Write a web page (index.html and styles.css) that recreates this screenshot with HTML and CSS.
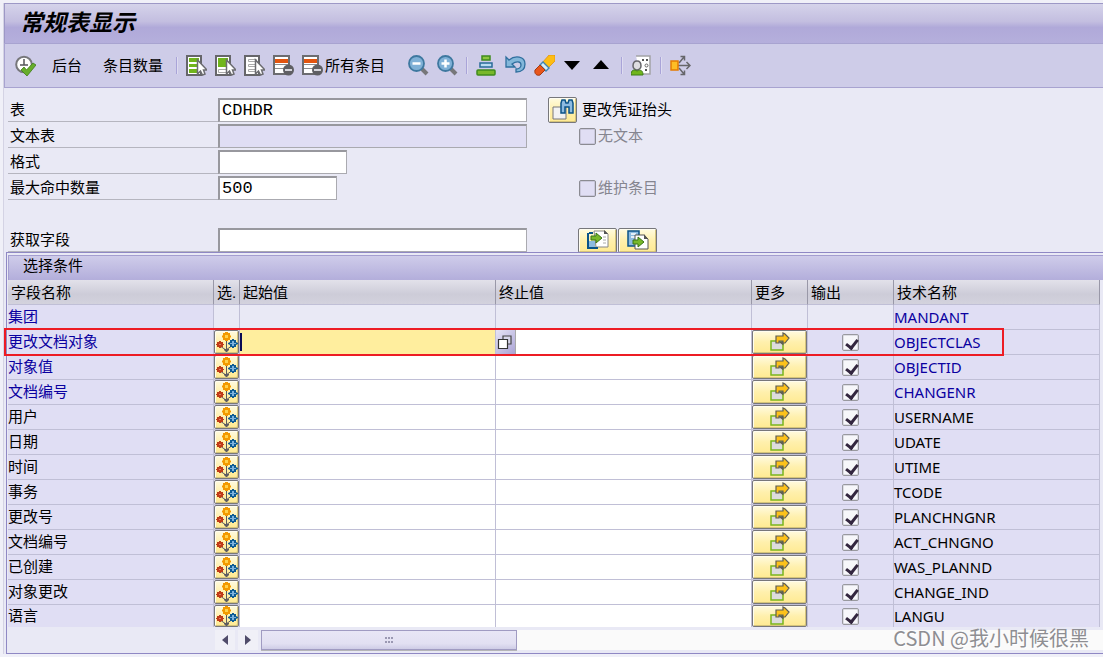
FILE: index.html
```html
<!DOCTYPE html>
<html lang="zh-CN">
<head>
<meta charset="utf-8">
<title>常规表显示</title>
<link rel="stylesheet" href="styles.css">
</head>
<body>
<svg class="sprite" aria-hidden="true">
  <symbol id="i-flower" viewBox="0 0 23 22">
    <path d="M11.500 8v11M5 15l6 4 7-5" fill="none" stroke="#5b5b60" stroke-width="1"/>
    <path d="M9 18h5v1l-2 2h-1l-2-2z" fill="#5b5b60"/>
    <path d="M10 1h3v1h2v2l1 1v1l-1 1v2h-2v1h-3V9H8V7L7 6V5l1-1V2h2z" fill="#f39a00"/>
    <path d="M10 4h3v3h-3z" fill="#ffd24a"/>
    <path d="M4 10h2v1h2v2h1v1H8v2H6v1H4v-1H2v-2H1v-1h1v-2h2z" fill="#bf3a18"/>
    <path d="M4 13h2v1H4z" fill="#e08060"/>
    <path d="M17 8h2v1h2v2l2 1v1l-2 1v2h-2v1h-2v-1h-2v-2l-2-1v-1l2-1V9h2z" fill="#0d5b94"/>
    <path d="M15 12h6v1h-6zM17 10h2v5h-2z" fill="#7db2dc"/>
  </symbol>
  <symbol id="i-more" viewBox="0 0 20 20">
    <rect x="1" y="9" width="12" height="9" fill="#dcdcdc" stroke="#7ab51d" stroke-width="1.500"/>
    <path d="M8 9.500h5.500v4z" fill="#5d5d55"/>
    <path d="M6 4h7V1l2 1 4 4-4 5h-2V9H9v2H6z" fill="#fdc21a" stroke="#5d5d55" stroke-width="1.200"/>
  </symbol>
  <symbol id="i-sheet" viewBox="0 0 21 21">
    <rect x="1" y="1" width="14" height="19" fill="#fff" stroke="#66666a" stroke-width="2"/>
  </symbol>
  <symbol id="i-pointer" viewBox="0 0 21 21">
    <path d="M11.500 5v14l3-3 2 4 2.500-1-1.500-4H21z" fill="#fff" stroke="#6c6c70" stroke-width="1.500"/>
  </symbol>
  <symbol id="i-minus" viewBox="0 0 21 21">
    <rect x="1" y="1" width="15" height="18" fill="#fff" stroke="#6c6c70" stroke-width="2"/>
    <path d="M2 4h13v4H2z" fill="#e2540f"/><path d="M2 9.500h13M2 13.500h9" stroke="#8d8d90"/>
    <circle cx="15.500" cy="15" r="5.500" fill="#5f5f63"/><path d="M12 15h7" stroke="#d6d6dc" stroke-width="2"/>
  </symbol>
</svg>

<main class="window">
  <header class="titlebar"><h1>常规表显示</h1></header>

  <nav class="toolbar" aria-label="工具栏">
    <button type="button" aria-label="执行"><svg viewBox="0 0 21 21"><circle cx="9" cy="9.500" r="7.800" fill="#fff" stroke="#77777b" stroke-width="2"/><path d="M9 4v6M5 10h8" stroke="#55555a" stroke-width="1.500"/><path d="M6 15l3-3 2.500 3L18 8l3 2-9 11z" fill="#67ad2b" stroke="#3d7d16" stroke-width=".8"/></svg></button>
    <button type="button" class="text">后台</button>
    <button type="button" class="text">条目数量</button>
    <i class="sep"></i>
    <button type="button" aria-label="全选"><svg viewBox="0 0 21 21"><use href="#i-sheet"/><path d="M3 3h10v4H3zM3 9h10v3H3zM3 14h10v4H3z" fill="#70b51c"/><use href="#i-pointer"/></svg></button>
    <button type="button" aria-label="选择块"><svg viewBox="0 0 21 21"><use href="#i-sheet"/><path d="M3 3h10v9H3z" fill="#70b51c"/><path d="M3.500 14.500h8v3h-8z" fill="none" stroke="#aaa"/><use href="#i-pointer"/></svg></button>
    <button type="button" aria-label="取消全选"><svg viewBox="0 0 21 21"><use href="#i-sheet"/><path d="M4.500 4.500h8v2h-8zM4.500 9.500h8v2h-8zM4.500 14.500h8v2h-8z" fill="#fff" stroke="#aaa"/><use href="#i-pointer"/></svg></button>
    <button type="button" aria-label="删除条目"><svg viewBox="0 0 21 21"><use href="#i-minus"/></svg></button>
    <button type="button" class="wide"><svg viewBox="0 0 21 21"><use href="#i-minus"/></svg>所有条目</button>
    <button type="button" aria-label="缩小"><svg viewBox="0 0 21 21"><path d="M14 14l5 5" stroke="#77777a" stroke-width="4"/><circle cx="8.500" cy="8.500" r="7.500" fill="#7fb0d6" stroke="#3e789f" stroke-width="1.800"/><path d="M4.500 8.500h8" stroke="#fff" stroke-width="2.500"/></svg></button>
    <button type="button" aria-label="放大"><svg viewBox="0 0 21 21"><path d="M14 14l5 5" stroke="#77777a" stroke-width="4"/><circle cx="8.500" cy="8.500" r="7.500" fill="#7fb0d6" stroke="#3e789f" stroke-width="1.800"/><path d="M4.500 8.500h8M8.500 4.500v8" stroke="#fff" stroke-width="2.500"/></svg></button>
    <i class="sep"></i>
    <button type="button" aria-label="排序"><svg viewBox="0 0 21 21"><rect x="6" y="1" width="8" height="4" fill="#8cc63f" stroke="#3f8a1c" stroke-width="1.500"/><rect x="4" y="8" width="12" height="4" fill="#b9dcf2" stroke="#2a6b98" stroke-width="1.500"/><rect x="1" y="15" width="18" height="5" rx="1" fill="#78b82a" stroke="#3f8a1c" stroke-width="1.500"/></svg></button>
    <button type="button" aria-label="撤销"><svg viewBox="0 0 21 21"><path d="M1 2v10h9l-3-3c4-3 9-3 9 1 0 2-2 4-5 4v3c6 0 9-3 9-8C20 1 10 0 4 5z" fill="#83b7da" stroke="#2f6f9e" stroke-width="1.300"/></svg></button>
    <button type="button" aria-label="清除"><svg viewBox="0 0 21 21"><path d="M15 0h6v6l-8 8-5-6z" fill="#fdbd14" stroke="#e08b00" stroke-width=".7"/><path d="M9 7l6 6-3 3-6-6z" fill="#d9ecf7" stroke="#3e85b4" stroke-width="1.400"/><path d="M6 10l5 5-5 5c-3 1-6-1-5-5z" fill="#e8551b" stroke="#a33a12"/></svg></button>
    <button type="button" aria-label="向下"><svg viewBox="0 0 21 21"><path d="M1 6h16l-8 9z"/></svg></button>
    <button type="button" aria-label="向上"><svg viewBox="0 0 21 21"><path d="M1 14h16L9 5z"/></svg></button>
    <i class="sep"></i>
    <button type="button" aria-label="用户设置"><svg viewBox="0 0 21 21"><path d="M5 1h14v18H9" fill="#fff" stroke="#a2a2a5" stroke-width="1.500"/><path d="M11 4h2v2h-2zM15 4h2v2h-2zM14 14h2v2h-2z" fill="#555"/><circle cx="15.500" cy="10.500" r="1.500" fill="none" stroke="#666"/><path d="M6 6c4 0 4 3 4 5s-2 4-4 4-4-2-4-4 0-5 4-5z" fill="#dedee0" stroke="#66666a" stroke-width="1.500"/><path d="M0 20c0-5 3-6 6-4 4-2 6 0 6 4z" fill="#70b51c" stroke="#3d7d16"/></svg></button>
    <i class="sep"></i>
    <button type="button" aria-label="分发"><svg viewBox="0 0 21 21"><path d="M9 8l5-6M10.500 1.500h4v4M9 13l5 6M10.500 19.500h4v-4M8 10.500h12M16.500 7l3.500 3.500-3.500 3.500" fill="none" stroke="#66666a" stroke-width="1.500"/><rect x="1" y="6" width="7" height="9" fill="#fdbd25" stroke="#e57b00" stroke-width="1.500"/></svg></button>
  </nav>

  <form class="form">
    <div class="row"><label for="f-table">表</label><input id="f-table" class="full" value="CDHDR">
      <div class="aside"><button type="button" class="ybtn find" aria-label="查找"><svg viewBox="0 0 24 22"><path d="M2 8h13v12H2z" fill="#f2f2f2" stroke="#77777a"/><path d="M10 14V4l1-3h3l1 3h2l1-3h3l1 3v10h-4V8h-4v6z" fill="#8dbbe0" stroke="#0b5388" stroke-width="1.500"/></svg></button><span>更改凭证抬头</span></div></div>
    <div class="row"><label for="f-text">文本表</label><input id="f-text" class="full" disabled>
      <label class="check"><input type="checkbox" disabled>无文本</label></div>
    <div class="row"><label for="f-layout">格式</label><input id="f-layout" class="medium"></div>
    <div class="row"><label for="f-max">最大命中数量</label><span class="slot"><input id="f-max" class="short" value="500"></span>
      <label class="check"><input type="checkbox" disabled>维护条目</label></div>
    <div class="row last"><label for="f-fields">获取字段</label><input id="f-fields" class="full">
      <div class="aside pair"><button type="button" class="ybtn" aria-label="导入"><svg viewBox="0 0 22 20"><path d="M7 1h11l3 3v13H9z" fill="#fff" stroke="#888"/><path d="M17 0l4 4h-4z" fill="#555"/><path d="M2 3h4M1 3v15h10" fill="none" stroke="#0b5388" stroke-width="2"/><path d="M2 11h6v6H2z" fill="#8dbbe0"/><path d="M16 7h3M16 10h3M16 13h3" stroke="#aaa"/><path d="M4 6h5V3l6 5-6 5v-3H4z" fill="#78b82a" stroke="#397416"/></svg></button><button type="button" class="ybtn" aria-label="导出"><svg viewBox="0 0 22 20"><path d="M1 1h11v15H1z" fill="#8dbbe0" stroke="#0b5388" stroke-width="1.500"/><path d="M4 4h5M4 7h5" stroke="#fff" stroke-width="1.500"/><path d="M8 5h9l4 4v10H8z" fill="#fff" stroke="#555"/><path d="M17 4l4 5h-4z" fill="#555"/><path d="M6 10h5V7l6 5-6 5v-3H6z" fill="#78b82a" stroke="#397416"/></svg></button></div></div>
  </form>

  <section class="group">
    <h2>选择条件</h2>
    <div class="tablebox">
      <table>
        <colgroup><col class="c-name"><col class="c-sel"><col class="c-val"><col class="c-val"><col class="c-more"><col class="c-out"><col></colgroup>
        <thead><tr><th>字段名称</th><th>选.</th><th>起始值</th><th>终止值</th><th>更多</th><th>输出</th><th>技术名称</th></tr></thead>
        <tbody id="rows"></tbody>
      </table>
      <div class="highlight"></div>
    </div>
    <div class="scroll">
      <button type="button" aria-label="向左滚动"><svg viewBox="0 0 10 12"><path d="M8 1v10L2 6z"/></svg></button>
      <button type="button" aria-label="向右滚动"><svg viewBox="0 0 10 12"><path d="M2 1v10l6-5z"/></svg></button>
      <div class="track"><div class="thumb"><i></i></div></div>
    </div>
    <p class="mark">CSDN @我小时候很黑</p>
  </section>
</main>
<script src="rows.js"></script>
</body>
</html>
```
FILE: rows.js
```js
const fields = [
  ["集团", "MANDANT", "key"],
  ["更改文档对象", "OBJECTCLAS", "key"],
  ["对象值", "OBJECTID", "key"],
  ["文档编号", "CHANGENR", "key"],
  ["用户", "USERNAME", ""],
  ["日期", "UDATE", ""],
  ["时间", "UTIME", ""],
  ["事务", "TCODE", ""],
  ["更改号", "PLANCHNGNR", ""],
  ["文档编号", "ACT_CHNGNO", ""],
  ["已创建", "WAS_PLANND", ""],
  ["对象更改", "CHANGE_IND", ""],
  ["语言", "LANGU", ""]
];

const help = '<button type="button" class="f4" aria-label="输入帮助"><svg viewBox="0 0 16 16"><path d="M6 2h8v8H6z" fill="#d8d6ea" stroke="#444" stroke-width="1.200"/><path d="M1.500 5.500h9v9h-9z" fill="#fff" stroke="#333" stroke-width="1.200"/></svg></button>';

document.getElementById("rows").innerHTML = fields.map(([name, tech, kind], i) => {
  const active = i === 1;
  const middle = i === 0
    ? '<td class="off"></td><td class="off"></td><td class="off"></td><td class="off"></td><td class="off"></td>'
    : `<td><button type="button" class="ybtn cell" aria-label="选择选项 ${tech}"><svg class="flower"><use href="#i-flower"/></svg></button></td>
       <td class="val${active ? " active" : ""}"><input aria-label="${name} 起始值"></td>
       <td class="val">${active ? help : ""}<input aria-label="${name} 终止值"></td>
       <td><button type="button" class="ybtn cell" aria-label="更多 ${tech}"><svg class="more"><use href="#i-more"/></svg></button></td>
       <td class="out"><input type="checkbox" checked aria-label="输出 ${tech}"></td>`;
  return `<tr class="${kind}"><td class="name">${name}</td>${middle}<td class="tech">${tech}</td></tr>`;
}).join("");
```
FILE: styles.css
```css
* { box-sizing: border-box; }
body {
  margin: 0;
  padding: 3px 0 3px 4px;
  background: #f0f0f8;
  color: #000;
  font: 15px/20px "Liberation Sans", "Noto Sans CJK SC", sans-serif;
}
button, input { font: inherit; color: inherit; margin: 0; }
button { padding: 0; border: 0; background: none; }
svg { display: block; }
.sprite { position: absolute; width: 0; height: 0; }
.window { background: #e9e9f5; box-shadow: -1px 0 #d4d3e4; overflow: hidden; }

.titlebar {
  height: 40px;
  padding: 0 15px 2px;
  display: flex;
  align-items: center;
  border: 1px solid #9d98c6;
  border-width: 1px 0 0 1px;
  background: linear-gradient(#d5d3ea, #c3bee0 45%, #b0a9d9 60%, #b5afdc);
}
h1 { margin: 0; font-size: 23px; line-height: 32px; font-style: italic; font-weight: 700; }

.toolbar {
  height: 45px;
  padding-left: 10px;
  display: flex;
  align-items: center;
  gap: 8px;
  border: 1px solid #a8a3d0;
  border-right: 0;
  background: #cecce8;
}
.toolbar button { display: flex; align-items: center; gap: 2px; white-space: nowrap; }
.toolbar svg { width: 21px; height: 21px; }
.toolbar .text { padding: 0 5px 0 8px; }
.toolbar .wide { margin-right: 15px; }
.sep { width: 2px; height: 17px; background: #a9a4d8; border-right: 1px solid #dedcf0; }

.form { padding: 9px 0 0 4px; }
.row { display: flex; height: 26px; align-items: flex-start; }
.row > label:first-child {
  width: 210px;
  height: 25px;
  padding: 3px 2px 0;
  border-bottom: 1px solid #b5b5bf;
}
.row > input, .slot > input {
  height: 24px;
  margin-top: 1px;
  padding: 0 2px;
  border: 2px solid #98989e;
  border-right: 1px solid #aaaab0;
  border-bottom: 1px solid #aaaab0;
  background: #fff;
  font: 17px/20px "Liberation Mono", monospace;
}
.row > input:disabled { background: #e0def4; }
.full, .slot { width: 309px; }
.medium { width: 129px; }
.short { width: 119px; }
.slot { display: flex; }
.check { display: flex; align-items: center; gap: 2px; margin-left: 52px; padding-top: 3px; color: #85858f; }
input[type="checkbox"] { appearance: none; width: 17px; height: 17px; border: 1px solid #8b8b92; border-radius: 2px; background: #e0def4; box-shadow: inset 0 0 0 1px #cac8dc; }
.aside { display: flex; align-items: center; gap: 5px; margin-left: 21px; height: 26px; }
.pair { margin-left: 51px; gap: 1px; }
.row.last { margin-top: 26px; height: 25px; }
.ybtn {
  display: flex;
  align-items: center;
  justify-content: center;
  width: 39px;
  height: 25px;
  border: 1px solid #77777b;
  border-radius: 2px;
  background: linear-gradient(#fffbe0, #fff0ad 50%, #ffea92);
  box-shadow: inset 1px 1px #fffdf0, inset -1px -1px #d5c47b;
}
.ybtn svg { width: 22px; height: 20px; flex: none; }
.ybtn.find { width: 29px; height: 26px; }
.find svg { width: 24px; height: 22px; }

.group { position: relative; margin-left: 2px; padding: 2px 0 3px 1px; border: 1px solid #8f88c4; border-right: 0; }
h2 {
  margin: 0;
  height: 25px;
  padding: 0 14px;
  border: 1px solid #a49ed0;
  border-width: 1px 0 0 1px;
  background: linear-gradient(#cfccea, #b3aedb);
  font-size: 15px;
  line-height: 20px;
  font-weight: 400;
}
.tablebox { position: relative; margin-right: 3px; }
table { width: 100%; table-layout: fixed; border-collapse: separate; border-spacing: 0; }
.c-name { width: 206px; }
.c-sel { width: 26px; }
.c-val { width: 256px; }
.c-more { width: 56px; }
.c-out { width: 86px; }
th, td { height: 25px; padding: 0; border: solid #c0bfd6; border-width: 0 1px 1px 0; }
th {
  padding: 1px 0 0 3px;
  text-align: left;
  font-weight: 400;
  line-height: 20px;
  white-space: nowrap;
  border-right-color: #9998a8;
  background: linear-gradient(#e2e1ea, #cdccd8 60%, #d3d2dd);
}
td { background: #e0def4; line-height: 20px; }
tr:last-child td { height: 22px; border-bottom: 0; }
tr:last-child .cell, tr:last-child .val input { height: 22px; }
td.off { background: #e9e9f5; }
.name { padding: 0; }
.tech { font-family: "Noto Sans", sans-serif; }
.key { color: #0a00a0; }
td.val { background: #fff; }
td.active { background: #ffee9e; }
.val input { width: 100%; height: 24px; padding: 0 3px; border: 0; outline: 0; background: none; vertical-align: top; }
.active input { border-left: 2px solid #0a0a55; height: 18px; margin: 3px 0; }
.cell { width: 100%; height: 24px; }
.cell .flower { width: 23px; height: 22px; }
.cell .more { width: 20px; height: 20px; }
.f4 { float: left; width: 20px; height: 24px; padding: 2px 1px; background: linear-gradient(135deg, #e6e4f5, #aaa3d5); border-right: 1px solid #aaa; }
.f4 svg { width: 16px; height: 16px; }
.f4 + input { width: calc(100% - 20px); }
td.out { text-align: center; }
.out input[type="checkbox"] { display: block; margin: 0 auto; border-color: #99999f; background: #f7f7fa; box-shadow: inset 0 0 0 1px #dddde4; position: relative; }
.out input::after { content: ""; position: absolute; left: 5px; top: 2px; width: 5px; height: 9px; border: solid #33263f; border-width: 0 3px 3px 0; transform: rotate(38deg); }
.highlight { position: absolute; left: -4px; top: 48px; width: 1000px; height: 28px; border: 2px solid #ed1c24; pointer-events: none; }

.scroll { display: flex; margin: 3px 0 0 207px; height: 20px; }
.scroll button { width: 20px; margin-right: 3px; display: grid; place-items: center; background: #f0f0f7; }
.scroll svg { width: 10px; height: 12px; fill: #504c6a; }
.track { flex: 1; background: #fafafa; }
.thumb { width: 256px; height: 20px; display: grid; place-items: center; border: 1px solid #a09bc2; box-shadow: 0 1px #b5b5b8; background: linear-gradient(#e8e6f6, #e2e0f2 70%, #cfcde6); }
.thumb i { width: 8px; height: 6px; background: repeating-linear-gradient(90deg, #9a98b2 0 2px, transparent 2px 3px); clip-path: polygon(0 0, 100% 0, 100% 33%, 0 33%, 0 67%, 100% 67%, 100% 100%, 0 100%); }
.mark {
  position: absolute;
  right: 14px;
  bottom: 0;
  margin: 0;
  font-family: "Noto Sans CJK SC", sans-serif;
  font-size: 20px;
  line-height: 30px;
  color: #8e8e92;
  text-shadow: 1px 1px #fff;
}
```
